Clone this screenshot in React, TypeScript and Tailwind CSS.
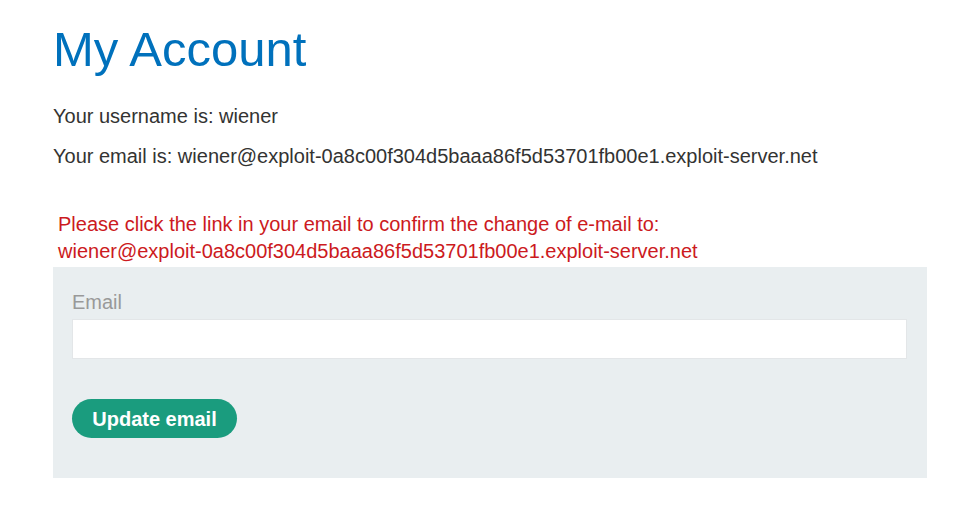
export default function App() {
  return (
    <div className="min-h-screen bg-white font-['Liberation_Sans',Arial,sans-serif] text-[#333332]">
      <div className="pl-[53px] pt-[21px]">
        <h1 className="text-[49px] leading-[56px] text-[#0071bc]">My Account</h1>
        <p className="mt-[26px] text-[20px] leading-[26px]">Your username is: wiener</p>
        <p className="mt-[14px] text-[20px] leading-[26px]">
          Your email is: wiener@exploit-0a8c00f304d5baaa86f5d53701fb00e1.exploit-server.net
        </p>
        <p className="mt-[42px] pl-[5px] text-[20px] leading-[27px] text-[#cc1a21]">
          Please click the link in your email to confirm the change of e-mail to:
          <br />
          wiener@exploit-0a8c00f304d5baaa86f5d53701fb00e1.exploit-server.net
        </p>
        <form className="mt-[2px] bg-[#e9eef0] px-[19px] pt-[22px] pb-[40px] w-[874px]">
          <label htmlFor="email" className="block text-[20px] leading-[26px] text-[#999999]">
            Email
          </label>
          <input
            id="email"
            name="email"
            type="email"
            className="mt-[4px] block w-[835px] h-[40px] bg-white border border-[#e3e6e8] outline-none"
          />
          <button
            type="submit"
            className="mt-[40px] h-[39px] w-[165px] rounded-full bg-[#1a9c7e] text-white font-bold text-[20px]"
          >
            Update email
          </button>
        </form>
      </div>
    </div>
  );
}
